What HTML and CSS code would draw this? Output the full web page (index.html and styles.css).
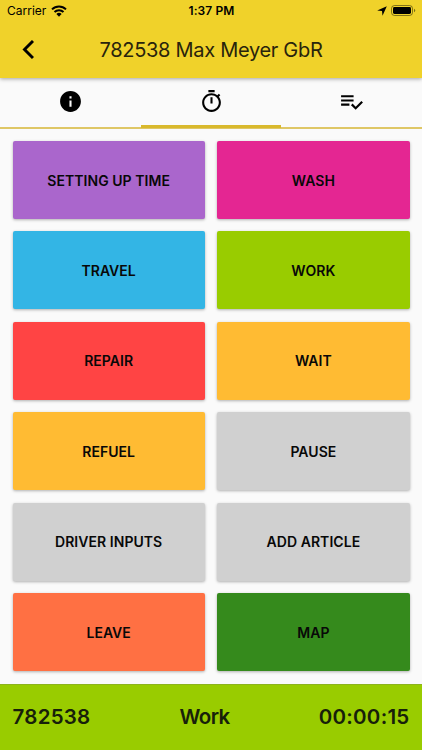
FILE: index.html
```html
<!DOCTYPE html>
<html lang="en">
<head>
    <meta charset="UTF-8">
    <meta name="viewport" content="width=device-width, initial-scale=1.0">
    <title>782538 Max Meyer GbR</title>
    <link rel="stylesheet" href="styles.css">
</head>
<body>
    <header>
        <div class="status-bar">
            <div class="carrier">
                <span>Carrier</span>
                <svg class="wifi" viewBox="0 0 16 12" width="16" height="12">
                    <path d="M1 4.4a10 10 0 0 1 14 0M3.5 7a6.4 6.4 0 0 1 9 0" fill="none" stroke="#000" stroke-width="2"/>
                    <path d="M5.4 9a3.7 3.7 0 0 1 5.2 0L8 11.7z"/>
                </svg>
            </div>
            <div class="clock">1:37 PM</div>
            <div class="battery">
                <svg viewBox="0 0 10 10" width="10" height="10">
                    <path d="M9.8.2L5.5 9.8 5 5 .2 4.5z"/>
                </svg>
                <svg viewBox="0 0 25 11" width="25" height="11">
                    <rect x=".5" y=".5" width="21" height="10" rx="3" fill="none" stroke="#000" stroke-opacity=".45"/>
                    <rect x="2" y="2" width="18" height="7" rx="1.4"/>
                    <path d="M23 3.8a1.8 1.8 0 0 1 0 3.4z" fill-opacity=".5"/>
                </svg>
            </div>
        </div>
        <div class="title-bar">
            <a href="#" class="back" aria-label="Back">
                <svg viewBox="0 0 12 20" width="12" height="20">
                    <path d="M11 1L2.500 9.500l8.500 8.500" fill="none" stroke="#000" stroke-width="2.900"/>
                </svg>
            </a>
            <h1>782538 Max Meyer GbR</h1>
        </div>
    </header>

    <nav>
        <a href="#" aria-label="Info">
            <svg viewBox="0 0 24 24" width="25" height="25">
                <path d="M12 2C6.480 2 2 6.480 2 12s4.480 10 10 10 10-4.480 10-10S17.520 2 12 2zm1 15h-2v-6h2v6zm0-8h-2V7h2v2z"/>
            </svg>
        </a>
        <a href="#" class="active" aria-label="Times">
            <svg viewBox="0 0 24 24" width="25" height="25">
                <path d="M15 1H9v2h6V1zm-4 13h2V8h-2v6zm8.030-6.610l1.420-1.420c-.43-.51-.9-.99-1.410-1.410l-1.420 1.420C16.070 4.740 14.120 4 12 4c-4.970 0-9 4.030-9 9s4.020 9 9 9 9-4.030 9-9c0-2.120-.74-4.070-1.970-5.610zM12 20c-3.870 0-7-3.130-7-7s3.130-7 7-7 7 3.130 7 7-3.130 7-7 7z"/>
            </svg>
        </a>
        <a href="#" aria-label="Checklist">
            <svg viewBox="0 0 24 24" width="25" height="25">
                <path d="M14 10H2v2h12v-2zm0-4H2v2h12V6zM2 16h8v-2H2v2zm19.500-4.500L23 13l-6.990 7-4.510-4.500L13 14l3.010 3 5.490-5.500z"/>
            </svg>
        </a>
    </nav>

    <main>
        <button class="setup">SETTING UP TIME</button>
        <button class="wash">WASH</button>
        <button class="travel">TRAVEL</button>
        <button class="work">WORK</button>
        <button class="repair">REPAIR</button>
        <button class="wait">WAIT</button>
        <button class="wait">REFUEL</button>
        <button>PAUSE</button>
        <button>DRIVER INPUTS</button>
        <button>ADD ARTICLE</button>
        <button class="leave">LEAVE</button>
        <button class="map">MAP</button>
    </main>

    <footer>
        <span>782538</span>
        <span class="activity">Work</span>
        <span>00:00:15</span>
    </footer>
</body>
</html>
```
FILE: styles.css
```css
* {
    box-sizing: border-box;
}

body {
    display: flex;
    flex-direction: column;
    height: 750px;
    margin: 0;
    background-color: #fafafa;
    color: #000;
    font-family: Inter, sans-serif;
}

svg {
    display: block;
}

header {
    position: relative;
    height: 78px;
    background-color: #f0d22a;
    box-shadow: 0 1px 4px rgba(0, 0, 0, 0.35);
}

.status-bar {
    display: grid;
    grid-template-columns: 1fr auto 1fr;
    align-items: center;
    height: 21px;
    padding: 0 6px 0 7px;
    font-size: 12px;
}

.carrier {
    display: flex;
    align-items: center;
    gap: 5px;
}

.clock {
    font-weight: 600;
    letter-spacing: 0.1px;
}

.battery {
    display: flex;
    align-items: center;
    justify-content: flex-end;
    gap: 4px;
}

.title-bar {
    display: grid;
    grid-template-columns: 60px 1fr 60px;
    align-items: center;
    height: 57px;
}

.back {
    padding-left: 22px;
}

h1 {
    margin: 0;
    color: #29240c;
    font-size: 20px;
    font-weight: 400;
    letter-spacing: -0.3px;
    text-align: center;
    white-space: nowrap;
}

nav {
    display: flex;
    height: 51px;
    border-bottom: 2px solid #dfc766;
}

nav a {
    display: flex;
    flex: 1;
    justify-content: center;
    padding-top: 10.5px;
}

nav .active {
    margin-bottom: -1px;
    border-bottom: 3px solid #d9b92c;
}

main {
    display: grid;
    flex: 1;
    grid-template-columns: 1fr 1fr;
    grid-auto-rows: 78px;
    gap: 12.45px;
    padding: 12px 12.5px;
}

button {
    padding: 0;
    border: 0;
    border-radius: 2px;
    background-color: #d0d0d0;
    box-shadow: 0 1px 3px rgba(0, 0, 0, 0.3);
    color: #080808;
    font-family: inherit;
    font-size: 14px;
    font-weight: 600;
    letter-spacing: 0.05px;
}

.setup {
    background-color: #aa66cc;
}

.wash {
    background-color: #e42692;
}

.travel {
    background-color: #33b5e5;
}

.work {
    background-color: #99cc00;
}

.repair {
    background-color: #ff4444;
}

.wait {
    background-color: #ffbb33;
}

.leave {
    background-color: #ff7043;
}

.map {
    background-color: #358a1c;
}

footer {
    display: flex;
    align-items: center;
    justify-content: space-between;
    height: 66.5px;
    padding: 0 12.5px 1px;
    border-top: 1px solid #8db31d;
    background-color: #99cc00;
    color: #17200a;
    font-size: 20.5px;
    font-weight: 600;
    letter-spacing: 0.25px;
}

.activity {
    letter-spacing: -0.6px;
}
```
